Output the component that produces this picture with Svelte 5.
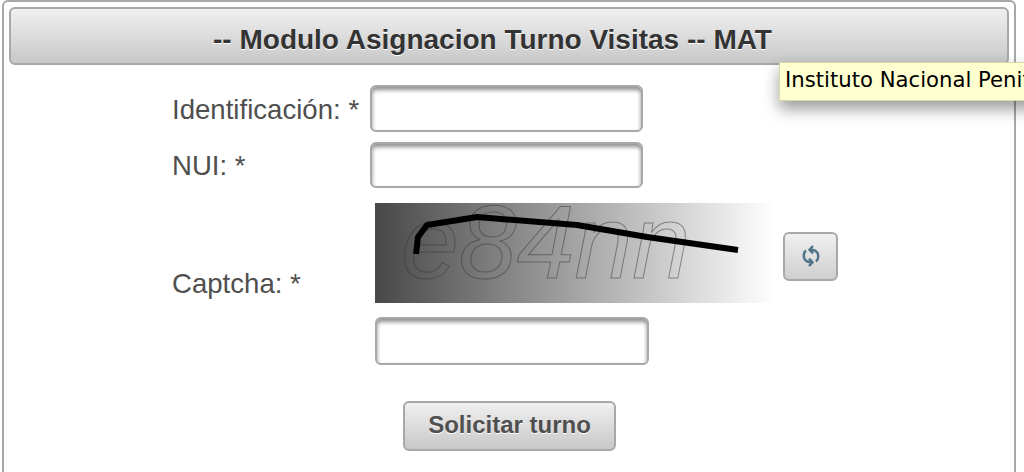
<script>
  const line = "41,51 43,34 52,22 102,14 202,22 272,34 363,47";
</script>

<div class="page">
  <section class="panel">
    <header class="head"><h1>-- Modulo Asignacion Turno Visitas -- MAT</h1></header>
    <form class="form" onsubmit={(e) => e.preventDefault()}>
      <div class="row first">
        <label for="id">Identificación: *</label>
        <input id="id" type="text" />
      </div>
      <div class="row second">
        <label for="nui">NUI: *</label>
        <input id="nui" type="text" />
      </div>
      <div class="row third">
        <label for="cap">Captcha: *</label>
        <div class="capcol">
          <div class="capline">
            <svg class="captcha" width="400" height="100" viewBox="0 0 400 100" role="img" aria-label="captcha">
              <defs>
                <linearGradient id="g" x1="0" x2="1" y1="0" y2="0">
                  <stop offset="0" stop-color="#484848" />
                  <stop offset="1" stop-color="#ffffff" />
                </linearGradient>
              </defs>
              <rect width="400" height="100" fill="url(#g)" />
              <text class="captext" x="26" y="75">e84nn</text>
              <polyline points={line} fill="none" stroke="#000" stroke-width="6" stroke-linejoin="round" />
            </svg>
            <button type="button" class="refresh" aria-label="Recargar">
              <svg width="22" height="24" viewBox="0 0 22 24" fill="none" stroke="#4d7388" stroke-width="2.4">
                <path d="M6 6.5 C3.5 8.5 3 13 5 15.8 C6.5 17.6 8 18.3 11 18.3" />
                <path d="M16 17.5 C18.5 15.5 19 11 17 8.2 C15.5 6.4 14 5.7 11 5.7" />
                <path d="M13 2 L9.5 5.7 L13 9.4" />
                <path d="M9 14.6 L12.5 18.3 L9 22" />
              </svg>
            </button>
          </div>
          <input id="cap" type="text" />
        </div>
      </div>
      <div class="actions">
        <button type="submit" class="submit">Solicitar turno</button>
      </div>
    </form>
  </section>
  <div class="tooltip">Instituto Nacional Penitenciario y Carcelario</div>
</div>

<style>
  :global(body) {
    margin: 0;
    background: #fff;
    overflow: hidden;
  }
  .page {
    position: relative;
    width: 1024px;
    height: 472px;
    overflow: hidden;
    font-family: "Liberation Sans", Arial, sans-serif;
  }
  .panel {
    box-sizing: border-box;
    width: 1014px;
    height: 520px;
    margin: 0 0 0 2px;
    border: 2px solid #a8a8a8;
    border-radius: 6px;
    padding: 5px 5px 0 5px;
  }
  .head {
    box-sizing: border-box;
    height: 58px;
    border: 2px solid #a8a8a8;
    border-radius: 6px;
    background: linear-gradient(#f0f0f0, #c8c8c8);
    display: flex;
    align-items: center;
    justify-content: center;
    padding: 8px 33px 0 0;
  }
  h1 {
    margin: 0;
    font-size: 28px;
    font-weight: bold;
    color: #333;
    text-shadow: 0 1px 0 #fff;
  }
  .form {
    padding-left: 163px;
  }
  .row {
    display: flex;
    align-items: center;
    color: #4f4f4f;
    font-size: 27.6px;
  }
  label {
    width: 198px;
    flex: none;
    padding-top: 2px;
  }
  input {
    box-sizing: border-box;
    display: block;
    border: 2px solid #a8a8a8;
    border-radius: 6px;
    background: #fff;
    box-shadow: inset 0 3px 4px rgba(0, 0, 0, 0.45);
    padding: 0;
    margin: 0;
  }
  .first {
    margin-top: 20px;
  }
  .first input {
    width: 273px;
    height: 47px;
  }
  .second {
    margin-top: 10px;
  }
  .second input {
    width: 273px;
    height: 46px;
  }
  .third {
    margin-top: 15px;
    align-items: flex-start;
  }
  .third label {
    margin-top: 63px;
  }
  .capcol {
    margin-left: 5px;
  }
  .capline {
    display: flex;
    align-items: center;
    gap: 8px;
  }
  .captcha {
    display: block;
    flex: none;
  }
  .captext {
    font-family: "Liberation Sans", Arial, sans-serif;
    font-style: italic;
    font-size: 104px;
    fill: none;
    stroke: #333;
    stroke-opacity: 0.5;
    stroke-width: 1;
  }
  .refresh {
    box-sizing: border-box;
    width: 55px;
    height: 49px;
    padding: 0;
    border: 2px solid #a8a8a8;
    border-radius: 6px;
    background: linear-gradient(#f0f0f0, #cfcfcf);
    display: flex;
    align-items: center;
    justify-content: center;
    position: relative;
    top: 3px;
  }
  #cap {
    width: 274px;
    height: 48px;
    margin-top: 14px;
  }
  .actions {
    margin-top: 36px;
    padding-left: 231px;
  }
  .submit {
    box-sizing: border-box;
    width: 213px;
    height: 50px;
    padding: 0 0 2px;
    border: 2px solid #a8a8a8;
    border-radius: 6px;
    background: linear-gradient(#f0f0f0, #c8c8c8);
    font-family: "Liberation Sans", Arial, sans-serif;
    font-size: 24px;
    font-weight: bold;
    color: #4f4f4f;
    text-shadow: 0 1px 0 #fff;
  }
  .tooltip {
    position: absolute;
    left: 779px;
    top: 62px;
    box-sizing: border-box;
    height: 39px;
    width: 400px;
    padding: 4px 0 0 5px;
    background: #ffffcf;
    border: 1px solid #d8d8b0;
    box-shadow: 0 8px 16px rgba(0, 0, 0, 0.4);
    font-family: "DejaVu Sans", sans-serif;
    font-size: 21.2px;
    color: #000;
    white-space: nowrap;
  }
</style>
